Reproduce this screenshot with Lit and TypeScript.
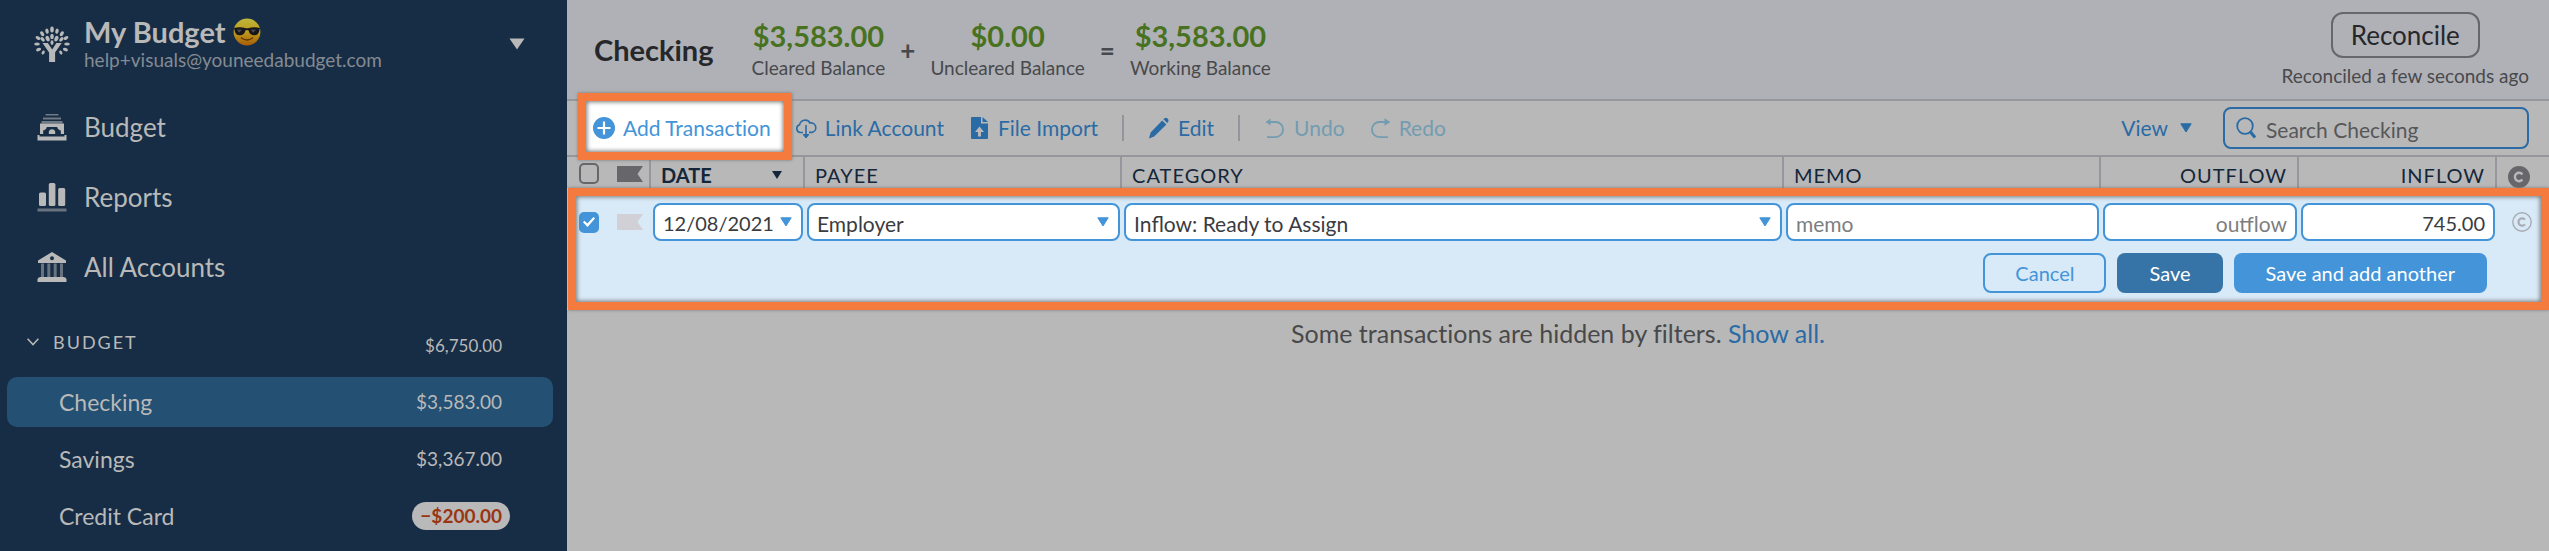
import { LitElement, html, svg, css } from "lit";
import { customElement, property, state } from "lit/decorators.js";

const icons = {
  tree: svg`<svg class="brand-icon" viewBox="0 0 36 36" width="36" height="36" fill="currentColor" aria-hidden="true">
    <path d="M8.5 17h5.3l4.4 6.6 4.2-6.6h5.3l-6.6 9.6V36h-6v-9.4z"/>
    <ellipse cx="18" cy="3.6" rx="1.8" ry="3"/><ellipse cx="18" cy="10.4" rx="1.8" ry="2.7"/><ellipse cx="18" cy="16.6" rx="1.5" ry="2.4"/>
    <ellipse cx="13" cy="5.2" rx="1.7" ry="2.6" transform="rotate(-14 13 5.2)"/><ellipse cx="23" cy="5.2" rx="1.7" ry="2.6" transform="rotate(14 23 5.2)"/>
    <ellipse cx="13.6" cy="12.6" rx="1.9" ry="2.9" transform="rotate(-22 13.6 12.6)"/><ellipse cx="22.4" cy="12.6" rx="1.9" ry="2.9" transform="rotate(22 22.4 12.6)"/>
    <ellipse cx="8.2" cy="7.8" rx="1.7" ry="2.7" transform="rotate(-36 8.2 7.8)"/><ellipse cx="27.8" cy="7.8" rx="1.7" ry="2.7" transform="rotate(36 27.8 7.8)"/>
    <ellipse cx="8.6" cy="13.4" rx="1.7" ry="2.6" transform="rotate(-46 8.6 13.4)"/><ellipse cx="27.4" cy="13.4" rx="1.7" ry="2.6" transform="rotate(46 27.4 13.4)"/>
    <ellipse cx="4" cy="12" rx="1.6" ry="2.6" transform="rotate(-62 4 12)"/><ellipse cx="32" cy="12" rx="1.6" ry="2.6" transform="rotate(62 32 12)"/>
    <ellipse cx="3" cy="18" rx="2.8" ry="1.6"/><ellipse cx="33" cy="18" rx="2.8" ry="1.6"/>
    <ellipse cx="4.6" cy="23.6" rx="2.6" ry="1.6" transform="rotate(-22 4.6 23.6)"/><ellipse cx="31.4" cy="23.6" rx="2.6" ry="1.6" transform="rotate(22 31.4 23.6)"/>
    <ellipse cx="9.2" cy="26.6" rx="2.1" ry="1.4" transform="rotate(-58 9.2 26.6)"/><ellipse cx="26.8" cy="26.6" rx="2.1" ry="1.4" transform="rotate(58 26.8 26.6)"/>
  </svg>`,
  emoji: svg`<svg viewBox="0 0 28 28" width="28" height="28" role="img" aria-label="Smiling face with sunglasses">
    <defs><linearGradient id="face" x1="0" y1="0" x2="0" y2="1"><stop offset="0" stop-color="#bdb63a"/><stop offset=".5" stop-color="#bd9c1c"/><stop offset="1" stop-color="#a85c08"/></linearGradient></defs>
    <circle cx="14" cy="14" r="13.4" fill="url(#face)"/>
    <path d="M1 10q6-1.800 12 .2h2q6-2 12-.2l-.6 2.200q-.5 5-5.200 5-4.600 0-5.600-4.800-1.600-1-3.200 0-1 4.800-5.600 4.800-4.700 0-5.200-5z" fill="#17171b"/>
    <path d="M4 11.500l5 .2-3 3zM18 11.500l5 .2-3 3z" fill="#4a4a50"/>
    <path d="M8.500 20q5.500 4 11 0" fill="none" stroke="#5d3204" stroke-width="1.400" stroke-linecap="round"/>
  </svg>`,
  budget: svg`<svg viewBox="0 0 30 30" width="30" height="30" fill="currentColor" aria-hidden="true">
    <g opacity=".55"><path d="M8.500 2h13v1.600h-13zM6 5.500h18v2H6zM4.500 9h21v2.500h-21z"/></g>
    <path d="M3 11.500h24V22h-3.200v-3.600q-3.200-.4-3.600-3.400H9.800q-.4 3-3.600 3.400V22H3zM11.800 22v-2.400q.6-2.400 3.200-2.400t3.200 2.400V22z"/>
    <path d="M.5 23h2v1.500h25V23h2v5.500H.5z"/>
  </svg>`,
  reports: svg`<svg viewBox="0 0 30 30" width="30" height="30" fill="currentColor" aria-hidden="true">
    <rect x="2" y="10.500" width="7" height="13.500" rx="1.500"/><rect x="11.800" y="1" width="6.600" height="23" rx="1.500"/><rect x="21.200" y="6" width="7" height="18" rx="1.500"/>
    <rect x=".5" y="26.500" width="29" height="3" opacity=".5"/>
  </svg>`,
  bank: svg`<svg viewBox="0 0 30 32" width="30" height="32" fill="currentColor" aria-hidden="true">
    <path fill-rule="evenodd" d="M15 1l14 8.500V12H1V9.500zM15 5.200a2 2 0 1 0 0 4 2 2 0 0 0 0-4z"/>
    <path opacity=".5" d="M4 12.500h3V26H4zM10.300 12.500h3V26h-3zM16.700 12.500h3V26h-3zM23 12.500h3V26h-3z"/>
    <path d="M3 26h24q2.500.5 2.500 2.500V31H.5v-2.500Q.5 26.500 3 26z"/>
  </svg>`,
  chevron: svg`<svg viewBox="0 0 12 8" width="12" height="8" fill="none" stroke="currentColor" stroke-width="1.500" aria-hidden="true"><path d="M.6.800L6 6.600 11.400.800"/></svg>`,
  bigCaret: svg`<svg viewBox="0 0 16 12" width="16" height="12" fill="currentColor" aria-hidden="true"><path d="M.5.500h15L8 11.500z"/></svg>`,
  caret: svg`<svg class="caret" viewBox="0 0 12 10" width="12" height="10" fill="currentColor" stroke="currentColor" stroke-width="1" stroke-linejoin="round" aria-hidden="true"><path d="M.800.800h10.400L6 9z"/></svg>`,
  plus: svg`<svg viewBox="0 0 22 22" width="22" height="22" aria-hidden="true"><circle cx="11" cy="11" r="11" fill="currentColor"/><path d="M11 4.500v13M4.500 11h13" stroke="#fff" stroke-width="2.200"/></svg>`,
  cloud: svg`<svg viewBox="0 0 22 22" width="22" height="22" fill="none" stroke="currentColor" stroke-width="1.600" aria-hidden="true">
    <path d="M8 15.500H5.300A4 4 0 0 1 4.600 7.700 5.600 5.600 0 0 1 15 6a4.800 4.800 0 0 1 2 9.400h-3"/><path d="M11 8v10"/><path d="M8.200 17.500h5.600L11 21z" fill="currentColor" stroke-width="1"/>
  </svg>`,
  file: svg`<svg viewBox="0 0 22 24" width="22" height="24" fill="currentColor" aria-hidden="true">
    <path fill-rule="evenodd" d="M4 1h9v6.500h7V22q0 1-1 1H4q-1 0-1-1V2q0-1 1-1zM11.500 10.500L7 16h3v4.500h3V16h3z"/><path d="M14.500 1L20 6h-5.500z"/>
  </svg>`,
  pencil: svg`<svg viewBox="0 0 22 22" width="22" height="22" fill="currentColor" aria-hidden="true"><path d="M14.200 3.400l4.200 4.200L6.200 19.600 1 21.400l1.600-5.800zM15.400 2.300l1-1q1.600-1.200 3.200.3t.6 3.300l-1 1.200z"/></svg>`,
  undo: svg`<svg viewBox="0 0 22 22" width="22" height="22" fill="none" stroke="currentColor" stroke-width="1.800" aria-hidden="true"><path d="M5 5h6.500a7.500 7.500 0 0 1 0 15.200H3"/><path d="M1.500 5L6.500 1.400v7.200z" fill="currentColor" stroke="none"/></svg>`,
  redo: svg`<svg viewBox="0 0 22 22" width="22" height="22" fill="none" stroke="currentColor" stroke-width="1.800" aria-hidden="true"><path d="M17 5h-6.500a7.500 7.500 0 0 0 0 15.200H19"/><path d="M21.500 5l-6-3.800v7.600z" fill="currentColor" stroke="none"/></svg>`,
  search: svg`<svg viewBox="0 0 20 22" width="20" height="22" fill="none" stroke="currentColor" aria-hidden="true"><circle cx="9" cy="9" r="7.800" stroke-width="1.800"/><path d="M14.500 15l4.500 5.500" stroke-width="3"/></svg>`,
  flag: svg`<svg viewBox="0 0 26 16" width="26" height="16" fill="currentColor" aria-hidden="true"><path d="M0 0h26l-5.500 8L26 16H0z"/></svg>`,
  cleared: svg`<svg viewBox="0 0 22 22" width="22" height="22" aria-hidden="true"><circle cx="11" cy="11" r="11" fill="#66666b"/><path d="M14.400 8.400a4.200 4.200 0 1 0 0 5.200" fill="none" stroke="#b8b8b8" stroke-width="2.400"/></svg>`,
  uncleared: svg`<svg viewBox="0 0 20 20" width="20" height="20" fill="none" stroke="#a9acb4" aria-hidden="true"><circle cx="10" cy="10" r="9.200" stroke-width="1.400"/><path d="M13 7.600a3.700 3.700 0 1 0 0 4.800" stroke-width="2.200"/></svg>`,
};

interface Account {
  name: string;
  balance: string;
  active?: boolean;
  negative?: boolean;
}

const base = css`
  :host, * { box-sizing: border-box; }
  button, input, select { font: inherit; font-variant-ligatures: inherit; color: inherit; margin: 0; }
  button { background: none; border: 0; padding: 0; cursor: pointer; }
  a { color: inherit; text-decoration: none; }
  svg { display: block; flex: none; }
`;

@customElement("budget-sidebar")
export class BudgetSidebar extends LitElement {
  @property({ attribute: false }) accounts: Account[] = [];

  static styles = [base, css`
    :host { display: block; background: #172d45; color: #b9b9b9; }
    .profile { display: flex; align-items: center; width: 100%; gap: 14px; padding: 16px 42px 20px 34px; text-align: left; }
    .profile-text { flex: 1; }
    .profile-name { display: flex; align-items: center; gap: 7px; font-size: 29px; font-weight: 700; line-height: 32px; }
    .profile-mail { font-size: 19px; line-height: 24px; color: #848b93; }
    .nav-link { display: flex; align-items: center; gap: 14px; height: 70px; padding-left: 34px; font-size: 26px; }
    .nav-icon { display: flex; justify-content: center; width: 36px; }
    .group { display: flex; align-items: flex-start; width: 100%; padding: 28px 65px 15px 27px; text-align: left; }
    .group-name { display: flex; align-items: center; gap: 14px; flex: 1; font-size: 18px; line-height: 24px; letter-spacing: 2px; }
    .group-total { font-size: 17px; line-height: 32px; }
    .accounts { display: grid; gap: 7px; margin: 0; padding: 0 14px 10px 7px; list-style: none; }
    .account { display: flex; align-items: center; justify-content: space-between; height: 50px; padding: 0 43px 0 52px; border-radius: 10px; font-size: 23px; }
    .account.active { background: #235073; }
    .balance { padding: 0 8px; font-size: 19px; line-height: 28px; }
    .balance.negative { border-radius: 14px; background: #b9b9b9; color: #9a3512; font-weight: 700; }
  `];

  render() {
    return html`
      <button class="profile" type="button">
        ${icons.tree}
        <span class="profile-text">
          <div class="profile-name">My Budget ${icons.emoji}</div>
          <div class="profile-mail">help+visuals@youneedabudget.com</div>
        </span>
        ${icons.bigCaret}
      </button>
      <nav>
        <a class="nav-link" href="#budget"><span class="nav-icon">${icons.budget}</span>Budget</a>
        <a class="nav-link" href="#reports"><span class="nav-icon">${icons.reports}</span>Reports</a>
        <a class="nav-link" href="#accounts"><span class="nav-icon">${icons.bank}</span>All Accounts</a>
      </nav>
      <button class="group" type="button" aria-expanded="true">
        <span class="group-name">${icons.chevron}BUDGET</span>
        <span class="group-total">$6,750.00</span>
      </button>
      <ul class="accounts">
        ${this.accounts.map((a) => html`
          <li><a class="account ${a.active ? "active" : ""}" href="#account">
            <span>${a.name}</span>
            <span class="balance ${a.negative ? "negative" : ""}">${a.balance}</span>
          </a></li>`)}
      </ul>`;
  }
}

@customElement("account-header")
export class AccountHeader extends LitElement {
  static styles = [base, css`
    :host { display: flex; align-items: center; justify-content: space-between; height: 101px; padding: 0 20px 0 27px; background: #b0b1b6; border-bottom: 2px solid #96979c; color: #48494c; }
    .summary { display: flex; align-items: center; gap: 15px; }
    .title { margin: 0 23px 0 0; font-size: 29px; font-weight: 700; color: #26272b; }
    .figure { text-align: center; font-size: 19px; line-height: 24px; }
    .amount { margin-bottom: 4px; font-size: 29px; line-height: 32px; font-weight: 700; color: #48721f; }
    .sign { font-size: 26px; line-height: 28px; font-weight: 700; }
    .reconcile { display: flex; flex-direction: column; align-items: center; gap: 6px; font-size: 19px; line-height: 24px; }
    .reconcile-button { height: 46px; padding: 0 18px; border: 2px solid #66676c; border-radius: 12px; font-size: 26px; color: #26272b; }
  `];

  render() {
    return html`
      <div class="summary">
        <h1 class="title">Checking</h1>
        <div class="figure"><div class="amount">$3,583.00</div>Cleared Balance</div>
        <span class="sign">+</span>
        <div class="figure"><div class="amount">$0.00</div>Uncleared Balance</div>
        <span class="sign">=</span>
        <div class="figure"><div class="amount">$3,583.00</div>Working Balance</div>
      </div>
      <div class="reconcile">
        <button class="reconcile-button" type="button">Reconcile</button>
        <span>Reconciled a few seconds ago</span>
      </div>`;
  }
}

@customElement("account-toolbar")
export class AccountToolbar extends LitElement {
  static styles = [base, css`
    :host { display: flex; align-items: center; gap: 24px; height: 56px; padding: 0 20px 0 26px; border-bottom: 2px solid #96979c; color: #2b6ba5; font-size: 21px; }
    .tool { display: flex; align-items: center; gap: 8px; line-height: 28px; white-space: nowrap; }
    .tool:disabled { color: #739cb1; cursor: default; }
    .spotlight { position: relative; z-index: 2; color: #4394d8; }
    .spotlight::before { content: ""; position: absolute; z-index: -1; inset: -21px -21px -18px -15px; border: 8px solid #f47a3e; background: #fff; box-shadow: inset 0 0 4px 1px #777, 0 0 3px #777; }
    .divider { width: 2px; height: 26px; background: #94959a; }
    .end { display: flex; align-items: center; gap: 31px; margin-left: auto; }
    .view { gap: 12px; }
    .search { display: flex; align-items: center; gap: 10px; width: 306px; height: 42px; padding: 0 11px; border: 2px solid #2b6ba5; border-radius: 8px; }
    .search-box { flex: 1; min-width: 0; border: 0; padding: 2px 0 0; background: none; outline: 0; font-size: 21px; color: #48494c; }
    .search-box::placeholder { color: #56575a; opacity: 1; }
  `];

  render() {
    return html`
      <button class="tool spotlight" type="button">${icons.plus}Add Transaction</button>
      <button class="tool" type="button">${icons.cloud}Link Account</button>
      <button class="tool" type="button">${icons.file}File Import</button>
      <span class="divider"></span>
      <button class="tool" type="button">${icons.pencil}Edit</button>
      <span class="divider"></span>
      <button class="tool" type="button" disabled>${icons.undo}Undo</button>
      <button class="tool" type="button" disabled>${icons.redo}Redo</button>
      <div class="end">
        <button class="tool view" type="button">View ${icons.caret}</button>
        <label class="search">${icons.search}
          <input class="search-box" type="text" placeholder="Search Checking" aria-label="Search Checking">
        </label>
      </div>`;
  }
}

@customElement("account-register")
export class AccountRegister extends LitElement {
  @state() private selected = true;

  static styles = [base, css`
    :host { display: block; overflow-x: clip; }
    .register { width: 100%; table-layout: fixed; border-collapse: separate; border-spacing: 0; }
    .col-icon { width: 41px; }
    .col-date { width: 154px; }
    .col-text { width: 16%; }
    .col-money { width: 198px; }
    .col-status { width: 54px; }
    th { height: 31px; padding: 4px 10px 0; border-left: 2px solid #96979c; font-size: 20px; line-height: 24px; font-weight: 400; letter-spacing: 1px; text-align: left; color: #14263a; }
    th.bare { border-left: 0; }
    th.sorted { font-weight: 700; letter-spacing: 0; }
    th.pick { padding: 2px 0 0 12px; }
    th.mark { padding: 2px 0 0 9px; color: #66666b; }
    th.status { padding: 9px 0 0 11px; }
    .sort { display: flex; align-items: center; justify-content: space-between; padding-right: 11px; }
    .money { text-align: right; }
    .tick { display: grid; place-items: center; appearance: none; width: 20px; height: 21px; border: 2px solid #66666b; border-radius: 5px; }
    .tick:checked { border-color: #4394d8; background: #4394d8; }
    .tick:checked::after { content: ""; width: 12px; height: 10px; background: #fff; clip-path: polygon(0 52%, 12% 38%, 36% 66%, 88% 0, 100% 14%, 38% 100%); }
    .entry { position: relative; background: #d8e9f7; color: #3a3c3f; }
    .entry::after { content: ""; position: absolute; inset: 0 0 0 1px; border: 8px solid #f47a3e; box-shadow: inset 0 0 4px 1px #777, 0 0 3px #777; pointer-events: none; }
    td { padding: 15px 0 0 4px; }
    td.pick { padding: 15px 0 0 12px; }
    td.mark { padding: 15px 0 0 9px; color: #d0d0d6; }
    td.status { padding: 15px 0 0 17px; }
    .field { display: grid; grid-template-columns: 1fr auto; align-items: center; height: 38px; border: 2px solid #4394d8; border-radius: 8px; background: #fff; font-size: 21px; }
    .control { grid-area: 1 / 1 / 2 / 3; width: 100%; min-width: 0; height: 34px; padding: 2px 8px 0; border: 0; outline: 0; background: none; appearance: none; font-variant-ligatures: normal; }
    .control.figures { font-size: 20px; }
    .control::placeholder { color: #7e7e80; opacity: 1; }
    .money .control { text-align: right; }
    .drop { grid-area: 1 / 2; margin-right: 9px; color: #4394d8; pointer-events: none; }
    .actions { display: flex; justify-content: flex-end; gap: 11px; padding: 12px 62px 17px 12px; }
    td.footer { padding: 0; }
    .action { height: 40px; padding: 0 32px; border-radius: 8px; background: #4394d8; font-size: 20px; color: #fff; }
    .action.primary { background: #3674a8; }
    .action.plain { padding: 0 30px; border: 2px solid #4394d8; background: none; color: #4394d8; }
    .notice { margin: 0; padding: 7px 20px; font-size: 25px; line-height: 32px; text-align: center; color: #48494b; }
    .notice-link { color: #2b6ba5; }
  `];

  render() {
    return html`
      <form>
        <table class="register">
          <colgroup>
            <col class="col-icon"><col class="col-icon"><col class="col-date"><col class="col-text"><col>
            <col class="col-text"><col class="col-money"><col class="col-money"><col class="col-status">
          </colgroup>
          <thead>
            <tr>
              <th class="bare pick"><input class="tick" type="checkbox" aria-label="Select all transactions"></th>
              <th class="bare mark" aria-label="Flag">${icons.flag}</th>
              <th class="sorted" id="date"><span class="sort">DATE
                <svg viewBox="0 0 10 8" width="10" height="8" fill="currentColor" aria-hidden="true"><path d="M0 0h10L5 8z"/></svg></span></th>
              <th id="payee">PAYEE</th>
              <th id="category">CATEGORY</th>
              <th id="memo">MEMO</th>
              <th class="money" id="outflow">OUTFLOW</th>
              <th class="money" id="inflow">INFLOW</th>
              <th class="status" aria-label="Cleared">${icons.cleared}</th>
            </tr>
          </thead>
          <tbody class="entry">
            <tr>
              <td class="pick"><input class="tick" type="checkbox" aria-label="Select transaction" .checked=${this.selected}
                @change=${(e: Event) => (this.selected = (e.target as HTMLInputElement).checked)}></td>
              <td class="mark">${icons.flag}</td>
              <td><span class="field"><input class="control figures" type="text" value="12/08/2021" aria-labelledby="date"><span class="drop">${icons.caret}</span></span></td>
              <td><span class="field"><select class="control" aria-labelledby="payee"><option>Employer</option></select><span class="drop">${icons.caret}</span></span></td>
              <td><span class="field"><select class="control" aria-labelledby="category"><option>Inflow: Ready to Assign</option></select><span class="drop">${icons.caret}</span></span></td>
              <td><span class="field"><input class="control" type="text" placeholder="memo" aria-labelledby="memo"></span></td>
              <td class="money"><span class="field"><input class="control" type="text" placeholder="outflow" aria-labelledby="outflow"></span></td>
              <td class="money"><span class="field"><input class="control figures" type="text" value="745.00" aria-labelledby="inflow"></span></td>
              <td class="status">${icons.uncleared}</td>
            </tr>
            <tr>
              <td class="footer" colspan="9">
                <div class="actions">
                  <button class="action plain" type="button">Cancel</button>
                  <button class="action primary" type="button">Save</button>
                  <button class="action" type="button">Save and add another</button>
                </div>
              </td>
            </tr>
          </tbody>
        </table>
      </form>
      <p class="notice">Some transactions are hidden by filters. <a class="notice-link" href="#all">Show all.</a></p>`;
  }
}

@customElement("app-root")
export class AppRoot extends LitElement {
  private accounts: Account[] = [
    { name: "Checking", balance: "$3,583.00", active: true },
    { name: "Savings", balance: "$3,367.00" },
    { name: "Credit Card", balance: "−$200.00", negative: true },
  ];

  static styles = css`
    :host { display: grid; grid-template-columns: 567px minmax(0, 1fr); min-height: 100vh; background: #b8b8b8; font-family: Lato, "Open Sans", sans-serif; font-variant-ligatures: none; }
  `;

  render() {
    return html`
      <budget-sidebar .accounts=${this.accounts}></budget-sidebar>
      <main>
        <account-header></account-header>
        <account-toolbar></account-toolbar>
        <account-register></account-register>
      </main>`;
  }
}
